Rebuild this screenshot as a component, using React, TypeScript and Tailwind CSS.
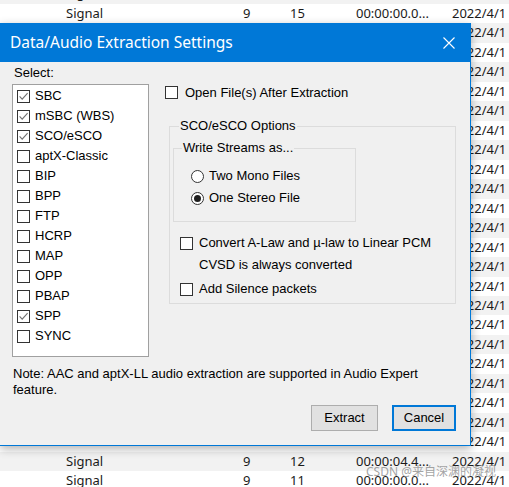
import React from 'react';

interface LogRow {
  name: string;
  ch: string;
  len: string;
  time: string;
  date: string;
}

// rows behind the dialog only show their date column past its right edge
const hiddenRows: LogRow[] = Array.from({ length: 22 }, () => ({ name: '', ch: '', len: '', time: '', date: '2022/4/1' }));

// first entry is the row scrolled half out of view
const rows: LogRow[] = [
  { name: 'Signal', ch: '9', len: '13', time: '00:00:00.0...', date: '2022/4/1' },
  { name: 'Signal', ch: '9', len: '15', time: '00:00:00.0...', date: '2022/4/1' },
  ...hiddenRows,
  { name: 'Signal', ch: '9', len: '12', time: '00:00:04.4...', date: '2022/4/1' },
  { name: 'Signal', ch: '9', len: '11', time: '00:00:00.0...', date: '2022/4/1' },
];

const profiles = [
  { label: 'SBC', checked: true },
  { label: 'mSBC (WBS)', checked: true },
  { label: 'SCO/eSCO', checked: true },
  { label: 'aptX-Classic', checked: false },
  { label: 'BIP', checked: false },
  { label: 'BPP', checked: false },
  { label: 'FTP', checked: false },
  { label: 'HCRP', checked: false },
  { label: 'MAP', checked: false },
  { label: 'OPP', checked: false },
  { label: 'PBAP', checked: false },
  { label: 'SPP', checked: true },
  { label: 'SYNC', checked: false },
];

const CheckBox: React.FC<{ checked?: boolean }> = ({ checked }) => (
  <span className="flex h-[13px] w-[13px] shrink-0 items-center justify-center border border-[#333333] bg-white">
    {checked && (
      <svg width="11" height="11" viewBox="0 0 11 11">
        <path d="M1.6 5.4 L4.2 8.2 L9.6 2.2" fill="none" stroke="#707070" strokeWidth="1.1" />
      </svg>
    )}
  </span>
);

const Radio: React.FC<{ checked?: boolean }> = ({ checked }) => (
  <span className="flex h-[13px] w-[13px] shrink-0 items-center justify-center rounded-full border border-[#333333] bg-white">
    {checked && <span className="h-[7px] w-[7px] rounded-full bg-[#1f1f1f]" />}
  </span>
);

const Dialog: React.FC = () => (
  <div className="absolute left-0 top-[23px] flex h-[423px] w-[471px] flex-col border-b border-r border-[#0078d7] bg-[#f0f0f0] shadow-[0_3px_9px_rgba(0,0,0,0.3)]">
    <div className="flex h-[39px] shrink-0 items-center justify-between bg-[#0078d7] pl-[10px] pr-[15px]">
      <span className="text-[15.5px] text-white [font-family:'Noto_Sans',sans-serif]">Data/Audio Extraction Settings</span>
      <svg width="12" height="12" viewBox="0 0 12 12">
        <path d="M0.5 0.5 L11.5 11.5 M11.5 0.5 L0.5 11.5" stroke="#ffffff" strokeWidth="1.1" />
      </svg>
    </div>

    <div className="flex flex-1 flex-col pl-[12px] pr-[14px] text-[13px] leading-[16px] text-black [font-family:'Liberation_Sans',Arial,sans-serif]">
      <div className="flex">
        <div className="flex w-[139px] flex-col">
          <span className="mt-[3px] pl-[2px]">Select:</span>
          <div className="mt-[3px] h-[273px] border border-[#a0a0a0] bg-white pt-[1px]">
            {profiles.map((p) => (
              <div key={p.label} className="flex h-[20px] items-center gap-[5px] pl-[4px]">
                <CheckBox checked={p.checked} />
                <span>{p.label}</span>
              </div>
            ))}
          </div>
        </div>

        <div className="ml-[16px] flex flex-col">
          <div className="mt-[22px] flex h-[17px] items-center gap-[7px]">
            <CheckBox />
            <span>Open File(s) After Extraction</span>
          </div>

          <fieldset className="ml-[4px] mt-[17px] h-[186px] w-[287px] border border-[#dcdcdc] p-0">
            <legend className="ml-[9px] px-[1px]">SCO/eSCO Options</legend>

            <fieldset className="ml-[3px] mt-[6px] h-[82px] w-[183px] border border-[#dcdcdc] p-0">
              <legend className="ml-[8px] px-[1px]">Write Streams as...</legend>
              <div className="mt-[9px] flex flex-col pl-[17px]">
                <div className="flex h-[22px] items-center gap-[5px]">
                  <Radio />
                  <span>Two Mono Files</span>
                </div>
                <div className="flex h-[22px] items-center gap-[5px]">
                  <Radio checked />
                  <span>One Stereo File</span>
                </div>
              </div>
            </fieldset>

            <div className="mt-[13px] flex flex-col pl-[10px]">
              <div className="flex h-[16px] items-center gap-[6px]">
                <CheckBox />
                <span>Convert A-Law and µ-law to Linear PCM</span>
              </div>
              <span className="mt-[6px] h-[16px] pl-[19px]">CVSD is always converted</span>
              <div className="mt-[8px] flex h-[16px] items-center gap-[6px]">
                <CheckBox />
                <span>Add Silence packets</span>
              </div>
            </div>
          </fieldset>
        </div>
      </div>

      <p className="mt-[9px] pl-[1px]">
        Note: AAC and aptX-LL audio extraction are supported in Audio Expert
        <br />
        feature.
      </p>

      <div className="mt-[7px] flex justify-end gap-[14px]">
        <button className="flex h-[26px] w-[67px] items-center justify-center border border-[#adadad] bg-[#e1e1e1]">Extract</button>
        <button className="flex h-[26px] w-[64px] items-center justify-center border-2 border-[#0078d7] bg-[#e1e1e1]">Cancel</button>
      </div>
    </div>
  </div>
);

export default function App() {
  return (
    <div className="relative h-[487px] w-[509px] overflow-hidden bg-white text-[13px] text-[#1a1a1a] [font-family:'Noto_Sans',sans-serif]">
      <div className="-mt-[15.5px] flex flex-col">
        {rows.map((r, i) => (
          <div
            key={i}
            className={`flex h-[19.48px] shrink-0 items-center whitespace-nowrap pl-[66px] ${i % 2 === 1 ? 'bg-white' : 'bg-[#f2f2f2]'}`}
          >
            <span className="w-[177px]">{r.name}</span>
            <span className="w-[47px]">{r.ch}</span>
            <span className="w-[66px]">{r.len}</span>
            <span className="w-[96px]">{r.time}</span>
            <span>{r.date}</span>
          </div>
        ))}
      </div>

      <Dialog />

      <span className="absolute left-[366px] top-[464px] text-[12px] leading-[15px] text-[#8c8c8c]/80 [font-family:'Noto_Sans','Noto_Sans_CJK_SC',sans-serif]">
        CSDN @来自深渊的凝视
      </span>
    </div>
  );
}
